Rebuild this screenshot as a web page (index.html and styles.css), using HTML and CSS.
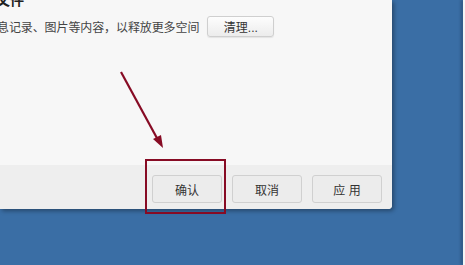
FILE: index.html
```html
<!DOCTYPE html>
<html lang="zh-CN">
<head>
  <meta charset="UTF-8" />
  <title>设置</title>
  <link rel="stylesheet" href="styles.css">
</head>
<body>
  <div class="dialog">
    <div class="dialog-body">
      <h3 class="section-title">文件</h3>
      <div class="clean-row">
        <span class="clean-text">息记录、图片等内容，以释放更多空间</span>
        <button class="btn btn-clean">清理...</button>
      </div>
    </div>
    <div class="dialog-footer">
      <button class="btn">确认</button>
      <button class="btn">取消</button>
      <button class="btn">应 用</button>
    </div>
  </div>

  <div class="other-window"></div>

  <!-- annotation over the screenshot -->
  <svg class="arrow" width="465" height="265" viewBox="0 0 465 265">
    <line x1="121" y1="72" x2="158" y2="140" stroke="#870b24" stroke-width="2.2" />
    <polygon points="163,148 153,139 161,135" fill="#870b24" />
  </svg>
  <div class="highlight-box"></div>
</body>
</html>
```

FILE: styles.css
```css
body {
  margin: 0;
  width: 465px;
  height: 265px;
  overflow: hidden;
  background: #3a6ea5;
  font-family: "Liberation Sans", "Noto Sans CJK SC", sans-serif;
  font-size: 12px;
  color: #333;
  position: relative;
}

.dialog {
  width: 392px;
  height: 209px;
  display: flex;
  flex-direction: column;
  background: #f7f7f7;
  border-bottom-right-radius: 4px;
  box-shadow: 2px 2px 4px rgba(0, 0, 0, 0.35);
  overflow: hidden;
}

.dialog-body {
  height: 165px;
  flex-shrink: 0;
}

.section-title {
  margin: -9px 0 0 -4px;
  font-size: 14px;
  font-weight: bold;
  color: #222;
  line-height: 18px;
}

.clean-row {
  display: flex;
  align-items: center;
  margin-top: 7px;
  margin-left: -3px;
}

.clean-text {
  color: #444;
  letter-spacing: -0.1px;
}

.btn {
  font-family: "Liberation Sans", "Noto Sans CJK SC", sans-serif;
  font-size: 12px;
  color: #333;
  width: 70px;
  height: 28px;
  background: #ececec;
  border: 1px solid #d0d0d0;
  border-radius: 3px;
  padding: 0;
}

.btn-clean {
  width: 67px;
  height: 21px;
  margin-left: 8px;
  background: linear-gradient(#fdfdfd, #ececec);
  border-color: #cfcfcf;
  box-shadow: 0 1px 1px rgba(0, 0, 0, 0.08);
}

.dialog-footer {
  flex: 1;
  background: #eeeeee;
  display: flex;
  justify-content: flex-end;
  align-items: flex-start;
  gap: 10px;
  padding: 10px 10px 0 0;
}

.other-window {
  position: absolute;
  left: 463px;
  top: 0;
  width: 2px;
  height: 265px;
  background: #f4f4f4;
  box-shadow: -2px 0 3px rgba(0, 0, 0, 0.3);
}

.arrow {
  position: absolute;
  left: 0;
  top: 0;
}

.highlight-box {
  position: absolute;
  left: 145px;
  top: 159px;
  width: 77px;
  height: 51px;
  border: 2px solid #870b24;
}
```
